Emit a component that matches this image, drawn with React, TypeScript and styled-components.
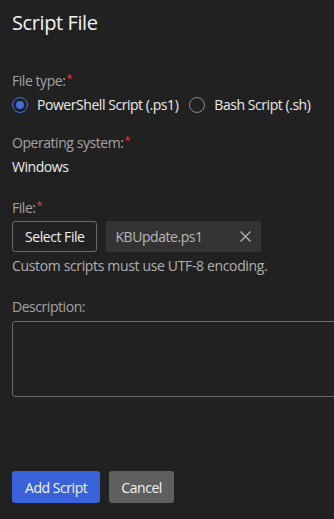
import React from "react";
import styled, { createGlobalStyle } from "styled-components";

const Global = createGlobalStyle`
  html, body { margin: 0; padding: 0; background: #212121; overflow: hidden; }
  body { font-family: "Open Sans", "Noto Sans", sans-serif; color: #e6e6e6; letter-spacing: -0.45px; }
  * { box-sizing: border-box; }
`;

const Page = styled.div`
  width: 334px;
  height: 519px;
  padding: 9px 0 0 12px;
  overflow: hidden;
  display: flex;
  flex-direction: column;
`;

const Title = styled.h2`
  margin: 0 0 35px 0;
  font-size: 20px;
  line-height: 28px;
  font-weight: 400;
  letter-spacing: -0.4px;
  color: #f2f2f2;
`;

const Field = styled.div<{ $gap?: number }>`
  display: flex;
  flex-direction: column;
  margin-bottom: ${(p) => p.$gap ?? 0}px;
`;

const Label = styled.div`
  font-size: 14px;
  line-height: 18px;
  color: #a3a3a3;
  margin-bottom: 4px;
`;

const Req = styled.span`
  color: #e0403c;
  font-size: 11px;
  vertical-align: top;
  line-height: 12px;
  margin-left: 1px;
`;

const RadioRow = styled.div`
  display: flex;
  align-items: center;
  height: 20px;
  margin-top: 1px;
  gap: 11px;
`;

const RadioOption = styled.label`
  display: flex;
  align-items: center;
  gap: 9px;
  font-size: 14px;
  line-height: 20px;
  color: #ececec;
`;

const RadioCircle = styled.span<{ $checked?: boolean }>`
  width: 16px;
  height: 16px;
  border-radius: 50%;
  border: 1.5px solid ${(p) => (p.$checked ? "#3d6fe3" : "#8a8a8a")};
  display: flex;
  align-items: center;
  justify-content: center;
  &::after {
    content: "";
    width: 8px;
    height: 8px;
    border-radius: 50%;
    background: ${(p) => (p.$checked ? "#3d6fe3" : "transparent")};
  }
`;

const Value = styled.div`
  font-size: 14px;
  line-height: 20px;
  color: #ececec;
  margin-top: 1px;
`;

const FileRow = styled.div`
  display: flex;
  align-items: center;
  gap: 9px;
  margin-bottom: 5px;
`;

const OutlineButton = styled.button`
  height: 31px;
  padding: 0 12px;
  border: 1px solid #6a6a6a;
  border-radius: 3px;
  background: transparent;
  color: #f0f0f0;
  font-family: inherit;
  font-size: 14px;
  letter-spacing: -0.45px;
`;

const FileChip = styled.div`
  width: 155px;
  height: 31px;
  background: #333333;
  display: flex;
  align-items: center;
  justify-content: space-between;
  padding: 0 10px 0 9px;
  font-size: 14px;
  color: #b8b8b8;
`;

const Hint = styled.div`
  font-size: 14px;
  line-height: 18px;
  letter-spacing: -0.35px;
  color: #b0b0b0;
`;

const TextArea = styled.textarea`
  width: 340px;
  height: 76px;
  margin-top: 1px;
  background: transparent;
  border: 1px solid #6a6a6a;
  border-radius: 3px;
  resize: none;
  color: #eee;
  font-family: inherit;
`;

const Actions = styled.div`
  display: flex;
  gap: 9px;
  margin-top: 74px;
`;

const ActionButton = styled.button<{ $primary?: boolean }>`
  height: 32px;
  padding: 0 ${(p) => (p.$primary ? 13 : 12)}px;
  border: none;
  border-radius: 3px;
  background: ${(p) => (p.$primary ? "#3a62da" : "#5f5f5f")};
  color: #f5f5f5;
  font-family: inherit;
  font-size: 14px;
  letter-spacing: -0.45px;
`;

const CloseIcon = () => (
  <svg width="11" height="11" viewBox="0 0 11 11" fill="none">
    <path d="M0.5 0.5L10.5 10.5M10.5 0.5L0.5 10.5" stroke="#b5b5b5" strokeWidth="1.2" />
  </svg>
);

export default function App() {
  return (
    <>
      <Global />
      <Page>
        <Title>Script File</Title>
        <Field $gap={19}>
          <Label>
            File type:<Req>*</Req>
          </Label>
          <RadioRow>
            <RadioOption>
              <RadioCircle $checked />
              PowerShell Script (.ps1)
            </RadioOption>
            <RadioOption>
              <RadioCircle />
              Bash Script (.sh)
            </RadioOption>
          </RadioRow>
        </Field>
        <Field $gap={22}>
          <Label>
            Operating system:<Req>*</Req>
          </Label>
          <Value>Windows</Value>
        </Field>
        <Field $gap={23}>
          <Label>
            File:<Req>*</Req>
          </Label>
          <FileRow>
            <OutlineButton>Select File</OutlineButton>
            <FileChip>
              KBUpdate.ps1
              <CloseIcon />
            </FileChip>
          </FileRow>
          <Hint>Custom scripts must use UTF-8 encoding.</Hint>
        </Field>
        <Field>
          <Label>Description:</Label>
          <TextArea />
        </Field>
        <Actions>
          <ActionButton $primary>Add Script</ActionButton>
          <ActionButton>Cancel</ActionButton>
        </Actions>
      </Page>
    </>
  );
}
